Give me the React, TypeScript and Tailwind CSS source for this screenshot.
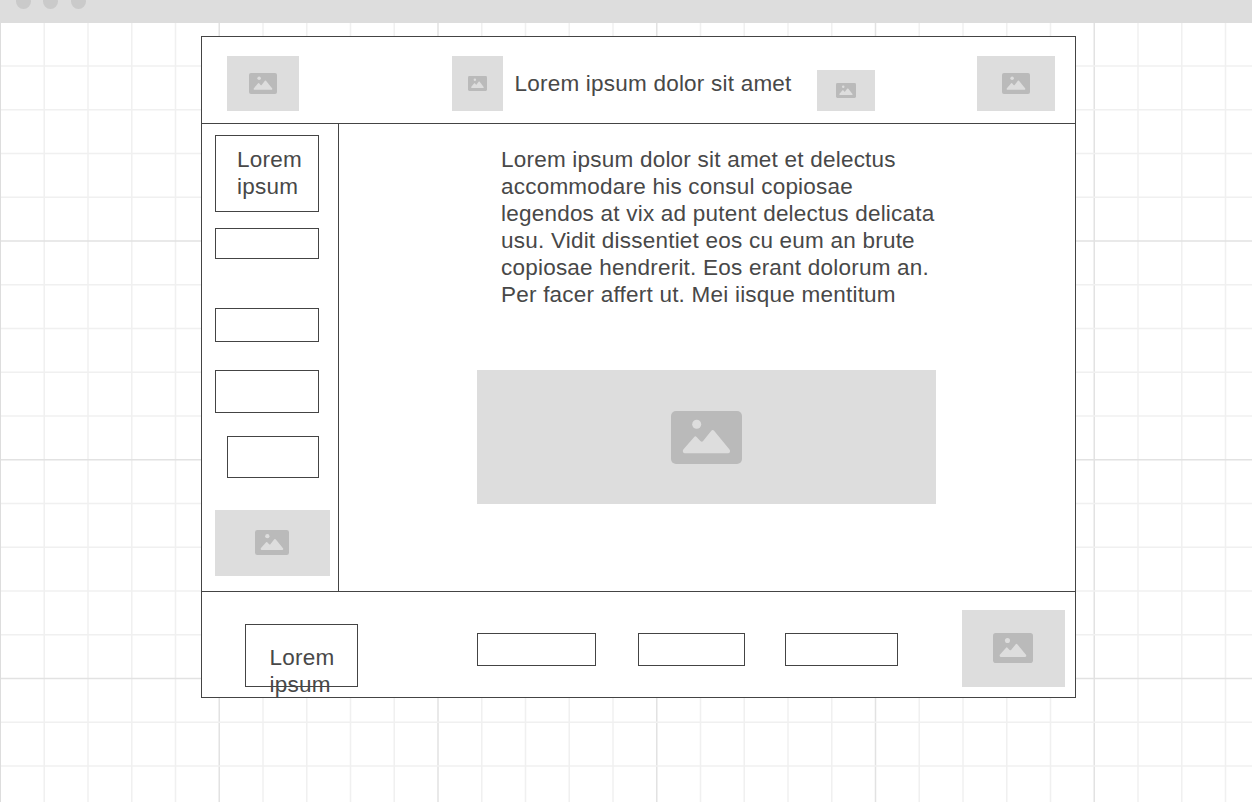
import type { ReactNode } from "react";
import { clsx } from "clsx";

const STEP = 43.75;
const columns = Array.from({ length: 28 }, (_, i) => i + 1);
const rows = Array.from({ length: 18 }, (_, i) => i + 1);

function GridBackdrop() {
  return (
    <svg className="absolute inset-0 h-full w-full" aria-hidden="true">
      {columns.map((i) => (
        <line
          key={`c${i}`}
          x1={0.5 + i * STEP}
          x2={0.5 + i * STEP}
          y1={0}
          y2={802}
          stroke={i % 5 === 0 ? "#e2e2e2" : "#f0f0f0"}
          strokeWidth={1.5}
        />
      ))}
      {rows.map((i) => (
        <line
          key={`r${i}`}
          x1={0}
          x2={1252}
          y1={i * STEP - 0.7}
          y2={i * STEP - 0.7}
          stroke={i % 5 === 0 ? "#e2e2e2" : "#f0f0f0"}
          strokeWidth={1.5}
        />
      ))}
      <line x1={0.5} x2={0.5} y1={0} y2={802} stroke="#dddddd" strokeWidth={1} />
    </svg>
  );
}

function Picture({ className, icon }: { className: string; icon: string }) {
  return (
    <div className={clsx("flex shrink-0 items-center justify-center bg-[#dddddd]", className)}>
      <svg viewBox="0 0 71 53" preserveAspectRatio="none" className={icon} aria-hidden="true">
        <rect width="71" height="53" rx="5" fill="#bababa" />
        <circle cx="25.7" cy="13.2" r="4.5" fill="#dddddd" />
        <path
          d="M12.5 38.2 L23.2 25.9 Q24.4 24.5 25.6 25.9 L29.4 30 Q30.8 31.3 32.1 30 L40.3 19.8 Q41.7 18.2 43.1 19.8 L58.5 38.5 Q59.4 39.8 58.9 41 Q58.4 42.3 57 42.3 L14 42.3 Q12.3 42.3 11.9 40.8 Q11.5 39.4 12.5 38.2 Z"
          fill="#dddddd"
        />
      </svg>
    </div>
  );
}

function Box({ className, children }: { className: string; children?: ReactNode }) {
  return <div className={clsx("shrink-0 border border-[#444444]", className)}>{children}</div>;
}

export default function App() {
  return (
    <div className="flex h-[802px] w-[1252px] flex-col overflow-hidden bg-white font-['Liberation_Sans',Arial,sans-serif] text-[22.5px] leading-[27px] tracking-[0.22px] text-[#484848]">
      <div className="flex h-[23px] shrink-0 gap-3 overflow-hidden bg-[#dddddd] pl-4">
        <span className="-mt-1.5 size-[15px] rounded-full bg-[#cacaca]" />
        <span className="-mt-1.5 size-[15px] rounded-full bg-[#cacaca]" />
        <span className="-mt-1.5 ml-px size-[15px] rounded-full bg-[#cacaca]" />
      </div>

      <div className="relative flex-1 pt-[13px] pl-[201px]">
        <GridBackdrop />
        <div className="relative flex h-[662px] w-[875px] flex-col border border-[#444444] bg-white">
          <header className="flex h-[87px] shrink-0 items-end border-b border-[#444444] pb-3 pl-[25px]">
            <Picture className="h-[55px] w-[72px]" icon="h-[21px] w-7" />
            <Picture className="ml-[153px] h-[55px] w-[51px]" icon="h-[15px] w-[19px]" />
            <h1 className="mb-[14px] ml-[11.5px] w-[302.5px] whitespace-nowrap">Lorem ipsum dolor sit amet</h1>
            <Picture className="h-[41px] w-[58px]" icon="h-[15px] w-5" />
            <Picture className="ml-[102px] h-[55px] w-[78px]" icon="h-[21px] w-7" />
          </header>

          <div className="flex h-[467px] shrink-0">
            <aside className="flex w-[137px] shrink-0 flex-col border-r border-[#444444] pt-[11px] pl-[13px]">
              <Box className="h-[77px] w-[104px] pt-[10px] pl-[21px]">
                Lorem
                <br />
                ipsum
              </Box>
              <Box className="mt-4 h-[31px] w-[104px]" />
              <Box className="mt-[49px] h-[34px] w-[104px]" />
              <Box className="mt-7 h-[43px] w-[104px]" />
              <Box className="mt-[23px] ml-3 h-[42px] w-[92px]" />
              <Picture className="mt-8 h-[66px] w-[115px] pr-px pb-px" icon="h-[25px] w-[34px]" />
            </aside>
            <main className="flex flex-col pt-[22px] pl-[138px]">
              <p className="ml-6 h-[162px] whitespace-nowrap">
                Lorem ipsum dolor sit amet et delectus
                <br />
                accommodare his consul copiosae
                <br />
                legendos at vix ad putent delectus delicata
                <br />
                usu. Vidit dissentiet eos cu eum an brute
                <br />
                copiosae hendrerit. Eos erant dolorum an.
                <br />
                Per facer affert ut. Mei iisque mentitum
              </p>
              <Picture className="mt-[62px] h-[134px] w-[459px]" icon="h-[53px] w-[71px]" />
            </main>
          </div>

          <footer className="flex h-[106px] shrink-0 items-start border-t border-[#444444] pl-[43px]">
            <Box className="mt-8 h-[63px] w-[113px] pt-[19px] pl-[23.5px]">
              Lorem
              <br />
              ipsum
            </Box>
            <Box className="mt-[41px] ml-[119px] h-[33px] w-[119px]" />
            <Box className="mt-[41px] ml-[42px] h-[33px] w-[107px]" />
            <Box className="mt-[41px] ml-10 h-[33px] w-[113px]" />
            <Picture className="mt-[18px] ml-16 h-[77px] w-[103px] pr-px pb-px" icon="h-[30px] w-10" />
          </footer>
        </div>
      </div>
    </div>
  );
}
